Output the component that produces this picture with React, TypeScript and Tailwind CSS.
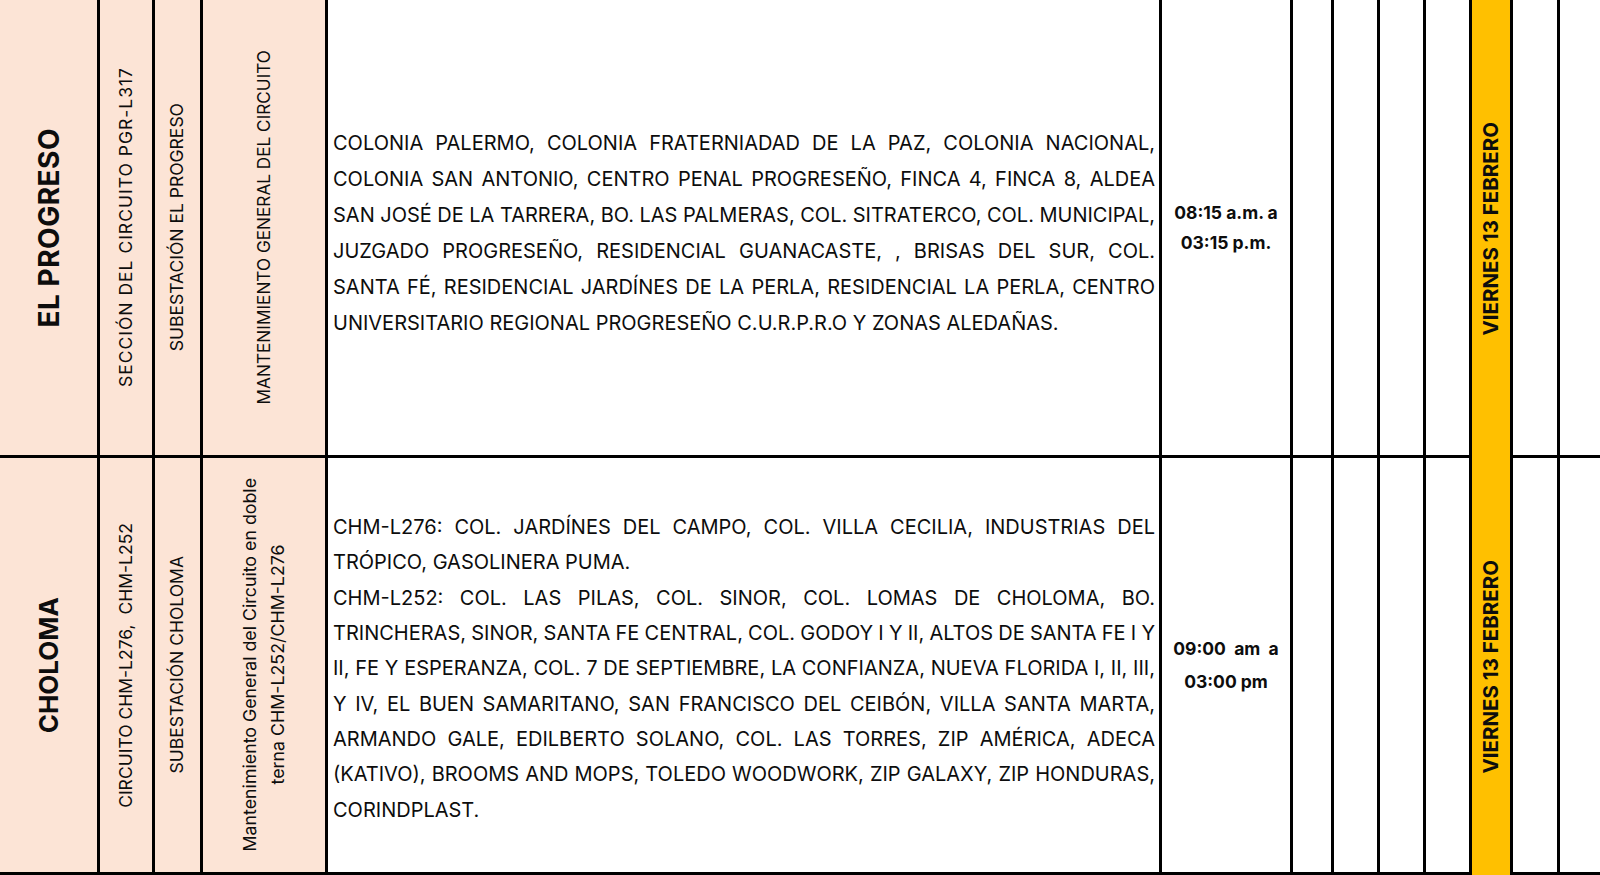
const pink = "bg-[#fce4d6]";

function Vert({ children, className = "" }: { children: React.ReactNode; className?: string }) {
  return (
    <div className={`[writing-mode:vertical-rl] rotate-180 text-center ${className}`}>{children}</div>
  );
}

function Lines({ lines, last }: { lines: string[]; last: number[] }) {
  return (
    <div className="w-full">
      {lines.map((l, i) => (
        <div
          key={i}
          className={
            last.includes(i)
              ? "text-left"
              : "text-justify [text-align-last:justify] [word-spacing:-2.5px]"
          }
        >
          {l}
        </div>
      ))}
    </div>
  );
}

const progreso = [
  "COLONIA PALERMO, COLONIA FRATERNIADAD DE LA PAZ, COLONIA NACIONAL,",
  "COLONIA SAN ANTONIO, CENTRO PENAL PROGRESEÑO, FINCA 4, FINCA 8, ALDEA",
  "SAN JOSÉ DE LA TARRERA, BO. LAS PALMERAS, COL. SITRATERCO, COL. MUNICIPAL,",
  "JUZGADO PROGRESEÑO, RESIDENCIAL GUANACASTE, , BRISAS DEL SUR, COL.",
  "SANTA FÉ, RESIDENCIAL JARDÍNES DE LA PERLA, RESIDENCIAL LA PERLA, CENTRO",
  "UNIVERSITARIO REGIONAL PROGRESEÑO C.U.R.P.R.O Y ZONAS ALEDAÑAS.",
];

const choloma = [
  "CHM-L276: COL. JARDÍNES DEL CAMPO, COL. VILLA CECILIA, INDUSTRIAS DEL",
  "TRÓPICO, GASOLINERA PUMA.",
  "CHM-L252: COL. LAS PILAS, COL. SINOR, COL. LOMAS DE CHOLOMA, BO.",
  "TRINCHERAS, SINOR, SANTA FE CENTRAL, COL. GODOY I Y II, ALTOS DE SANTA FE I Y",
  "II, FE Y ESPERANZA, COL. 7 DE SEPTIEMBRE, LA CONFIANZA, NUEVA FLORIDA I, II, III,",
  "Y IV, EL BUEN SAMARITANO, SAN FRANCISCO DEL CEIBÓN, VILLA SANTA MARTA,",
  "ARMANDO GALE, EDILBERTO SOLANO, COL. LAS TORRES, ZIP AMÉRICA, ADECA",
  "(KATIVO), BROOMS AND MOPS, TOLEDO WOODWORK, ZIP GALAXY, ZIP HONDURAS,",
  "CORINDPLAST.",
];

export default function App() {
  const cell = "flex items-center justify-center";
  return (
    <div className="w-[1600px] h-[875px] overflow-hidden bg-white font-['Inter','Liberation_Sans',sans-serif] text-[#0d0d0d]">
      <div className="grid grid-cols-[97px_52px_45px_122px_831px_128px_38px_43px_43px_43px_38px_44px_1fr] grid-rows-[455px_414px] gap-[3px] pb-[3px] bg-black">
        {/* fila 1 */}
        <div className={`${cell} ${pink}`}>
          <Vert className="text-[28px] font-bold tracking-[0.5px]">EL PROGRESO</Vert>
        </div>
        <div className={`${cell} ${pink}`}>
          <Vert className="text-[17.5px] tracking-[1px]">SECCIÓN DEL CIRCUITO PGR-L317</Vert>
        </div>
        <div className={`${cell} ${pink}`}>
          <Vert className="text-[17.5px]">SUBESTACIÓN EL PROGRESO</Vert>
        </div>
        <div className={`${cell} ${pink}`}>
          <Vert className="text-[17.2px]">MANTENIMIENTO GENERAL DEL CIRCUITO</Vert>
        </div>
        <div className={`${cell} bg-white pl-[5px] pr-[4px] pt-[10px] text-[20px] leading-[36px]`}>
          <Lines lines={progreso} last={[5]} />
        </div>
        <div className={`${cell} bg-white`}>
          <div className="text-center text-[17.5px] font-bold leading-[30px]">
            08:15 a.m. a
            <br />
            03:15 p.m.
          </div>
        </div>
        <div className="bg-white" />
        <div className="bg-white" />
        <div className="bg-white" />
        <div className="bg-white" />
        <div className="row-span-2 flex flex-col bg-[#ffc000] -mb-[3px]">
          <div className={`${cell} h-[458px]`}>
            <Vert className="text-[20.5px] font-bold">VIERNES 13 FEBRERO</Vert>
          </div>
          <div className={`${cell} flex-1`}>
            <Vert className="text-[20.5px] font-bold">VIERNES 13 FEBRERO</Vert>
          </div>
        </div>
        <div className="bg-white" />
        <div className="bg-white" />

        {/* fila 2 */}
        <div className={`${cell} ${pink}`}>
          <Vert className="text-[26px] font-bold">CHOLOMA</Vert>
        </div>
        <div className={`${cell} ${pink}`}>
          <Vert className="text-[17.5px] whitespace-pre">CIRCUITO CHM-L276,  CHM-L252</Vert>
        </div>
        <div className={`${cell} ${pink}`}>
          <Vert className="text-[17.5px]">SUBESTACIÓN CHOLOMA</Vert>
        </div>
        <div className={`${cell} ${pink}`}>
          <Vert className="text-[17.8px] leading-[28px]">
            Mantenimiento General del Circuito en doble
            <br />
            terna CHM-L252/CHM-L276
          </Vert>
        </div>
        <div className={`${cell} bg-white pl-[5px] pr-[4px] pt-[8px] text-[20px] leading-[35.3px]`}>
          <Lines lines={choloma} last={[1, 8]} />
        </div>
        <div className={`${cell} bg-white`}>
          <div className="text-center text-[17.5px] font-bold leading-[33px]">
            <span className="whitespace-pre">09:00  am  a</span>
            <br />
            03:00 pm
          </div>
        </div>
        <div className="bg-white" />
        <div className="bg-white" />
        <div className="bg-white" />
        <div className="bg-white" />
        <div className="bg-white" />
        <div className="bg-white" />
      </div>
    </div>
  );
}
